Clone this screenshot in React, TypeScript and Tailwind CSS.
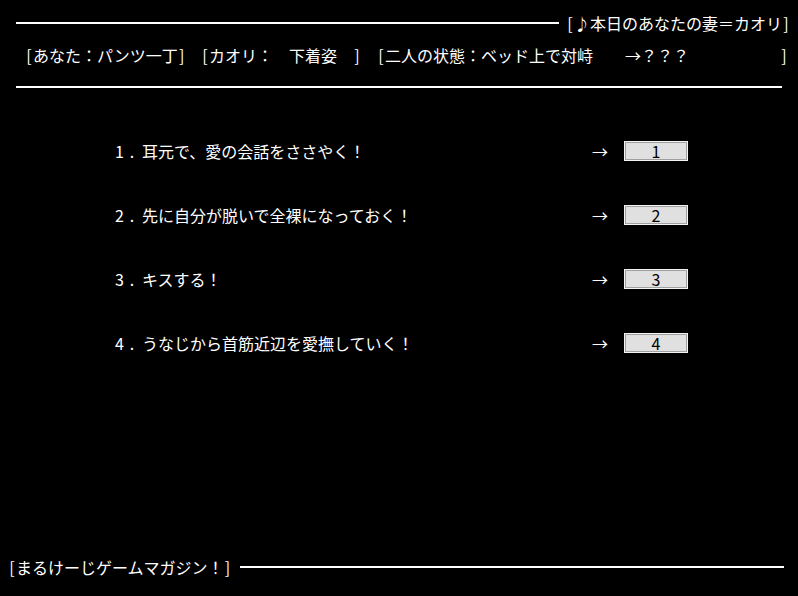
import React from "react";

const font = { fontFamily: '"Noto Sans CJK JP", "Noto Sans", sans-serif' };

function B({ c }: { c: string }) {
  return <span className="inline-block w-[8px] text-center">{c}</span>;
}

const items = [
  { n: "1", t: "耳元で、愛の会話をささやく！", k: "1" },
  { n: "2", t: "先に自分が脱いで全裸になっておく！", k: "2" },
  { n: "3", t: "キスする！", k: "3" },
  { n: "4", t: "うなじから首筋近辺を愛撫していく！", k: "4" },
];

export default function App() {
  return (
    <div
      className="w-[798px] h-[596px] bg-black text-white flex flex-col text-[16px] leading-[16px] overflow-hidden"
      style={font}
    >
      {/* Title row */}
      <div className="mt-[15px] h-[16px] flex items-center pl-[16px] pr-[8px]">
        <div className="flex-1 h-[2px] bg-white" />
        <div className="ml-[7px] whitespace-nowrap flex items-center">
          <B c="[" />
          <span>♪本日のあなたの妻＝カオリ</span>
          <B c="]" />
        </div>
      </div>

      {/* Status row */}
      <div className="mt-[16px] h-[16px] flex items-center pl-[25px] whitespace-nowrap">
        <span className="w-[176px] flex items-center">
          <B c="[" />
          <span>あなた：パンツ一丁</span>
          <B c="]" />
        </span>
        <span className="w-[176px] flex items-center">
          <B c="[" />
          <span>カオリ：　下着姿　</span>
          <B c="]" />
        </span>
        <span className="w-[248px] flex items-center">
          <B c="[" />
          <span>二人の状態：ベッド上で対峙</span>
        </span>
        <span className="w-[155px]">→？？？</span>
        <B c="]" />
      </div>

      <div className="mt-[23px] mx-[16px] h-[2px] bg-white" />

      {/* Choices */}
      <div className="mt-[53px] flex flex-col gap-[44px]">
        {items.map((it) => (
          <div key={it.k} className="h-[20px] flex items-center pl-[115px]">
            <span className="w-[477px] whitespace-nowrap flex items-center">
              <span className="inline-block w-[8px] text-center">{it.n}</span>
              <span className="inline-block w-[8px] ml-[5px] text-center">.</span>
              <span className="ml-[6px]">{it.t}</span>
            </span>
            <span className="w-[32px]">→</span>
            <div className="w-[64px] h-[20px] border border-[#f4f4f4] flex">
              <div className="flex-1 bg-[#e0e0e0] border border-[#a0a0a0] text-black flex items-center justify-center text-[16px]">
                {it.k}
              </div>
            </div>
          </div>
        ))}
      </div>

      {/* Footer */}
      <div className="mt-auto mb-[21px] h-[16px] flex items-center pl-[8px] pr-[14px]">
        <span className="whitespace-nowrap flex items-center">
          <B c="[" />
          <span>まるけーじゲームマガジン！</span>
          <B c="]" />
        </span>
        <div className="ml-[8px] flex-1 h-[2px] bg-white" />
      </div>
    </div>
  );
}
